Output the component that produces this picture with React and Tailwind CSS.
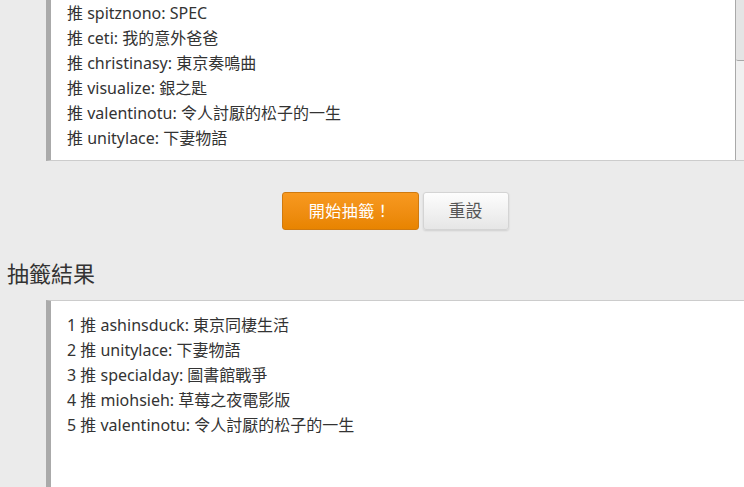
const pool = [
  "推 spitznono: SPEC",
  "推 ceti: 我的意外爸爸",
  "推 christinasy: 東京奏鳴曲",
  "推 visualize: 銀之匙",
  "推 valentinotu: 令人討厭的松子的一生",
  "推 unitylace: 下妻物語",
];

const results = [
  "1 推 ashinsduck: 東京同棲生活",
  "2 推 unitylace: 下妻物語",
  "3 推 specialday: 圖書館戰爭",
  "4 推 miohsieh: 草莓之夜電影版",
  "5 推 valentinotu: 令人討厭的松子的一生",
];

const font = { fontFamily: '"Segoe UI", "Noto Sans", "Noto Sans CJK TC", sans-serif' };

export default function App() {
  return (
    <div className="w-[744px] h-[487px] overflow-hidden bg-[#ebebeb] text-[#333]" style={font}>
      {/* candidate list */}
      <div className="pl-[46px]">
        <div className="flex h-[161px] bg-white border-l-[5px] border-l-[#aaa] border-b border-b-[#ccc]">
          <div className="flex-1 pl-[16px] pt-[1px] pb-[10px] text-[16px] leading-[25px]">
            {pool.map((line, i) => (
              <div key={i}>{line}</div>
            ))}
          </div>
          {/* scrollbar */}
          <div className="w-[9px] flex flex-col border-l border-[#a9a9a9] bg-[#f0f0f0]">
            <div className="h-[61px] bg-[#e4e4e4] border-b border-[#a9a9a9] rounded-bl-[2px]" />
          </div>
        </div>

        <div className="flex justify-center gap-[4px] mt-[31px]">
          <button
            type="button"
            className="w-[137px] h-[38px] rounded-[3px] border border-[#cf7a10] bg-gradient-to-b from-[#f8991f] to-[#e88400] text-white text-[16px] tracking-[0.5px]"
          >
            開始抽籤！
          </button>
          <button
            type="button"
            className="w-[86px] h-[38px] rounded-[3px] border border-[#d4d4d4] bg-gradient-to-b from-[#fdfdfd] to-[#e6e6e6] text-[#555] text-[17px] shadow-[0_1px_2px_rgba(0,0,0,0.12)]"
          >
            重設
          </button>
        </div>
      </div>

      <h2 className="mt-[28px] pl-[7px] text-[22px] leading-[30px] text-[#333]">抽籤結果</h2>

      {/* results */}
      <div className="pl-[46px] mt-[12px]">
        <div className="h-[200px] bg-white border-t border-t-[#ccc] border-l-[5px] border-l-[#aaa] pl-[16px] pt-[12px] text-[16px] leading-[25px]">
          {results.map((line, i) => (
            <div key={i}>{line}</div>
          ))}
        </div>
      </div>
    </div>
  );
}
